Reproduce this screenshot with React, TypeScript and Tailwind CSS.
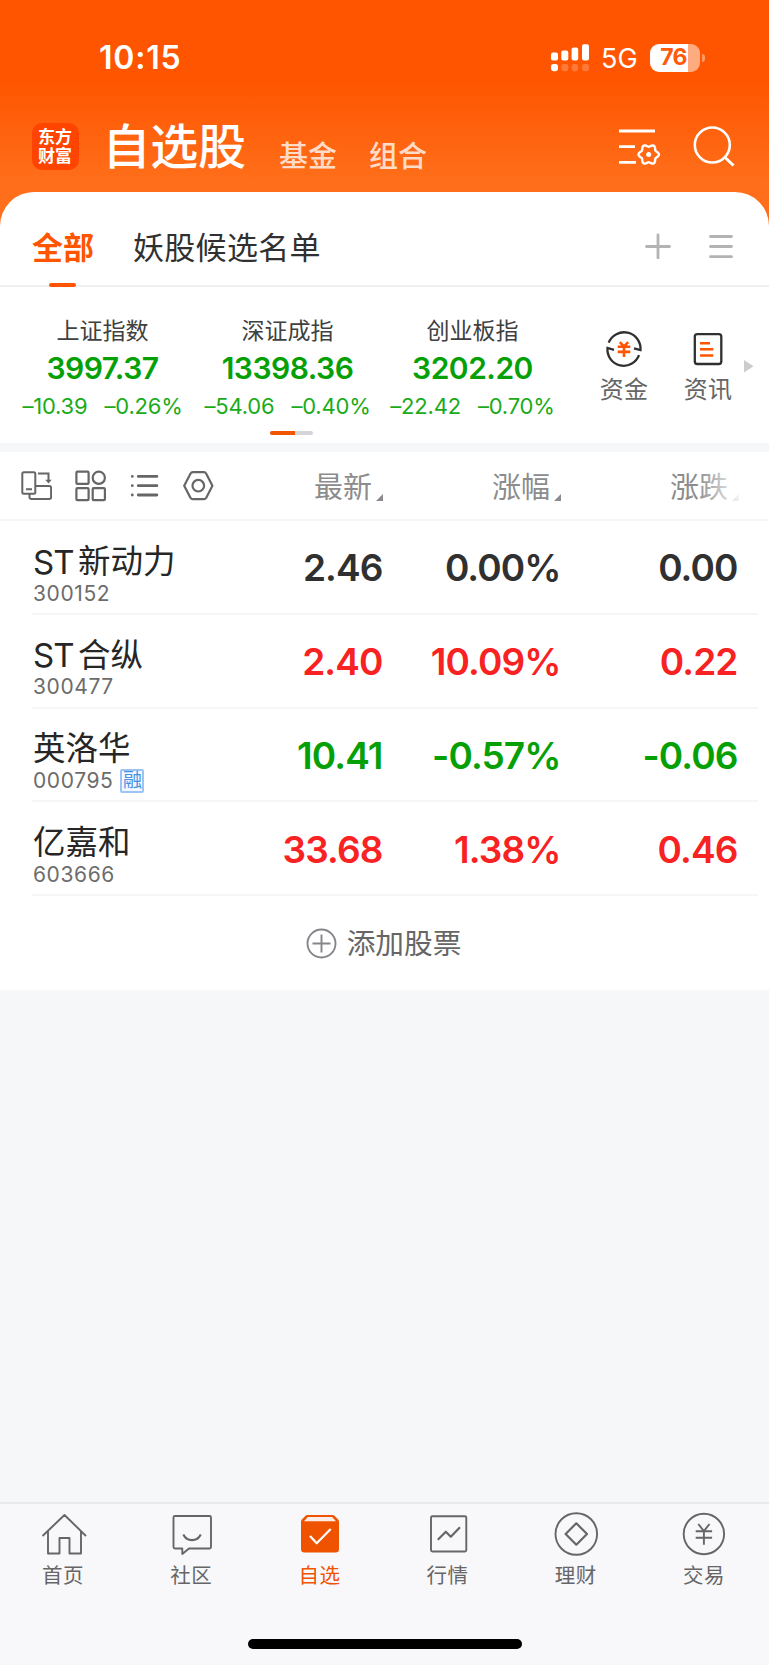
import type { ReactNode } from 'react';
import clsx from 'clsx';

interface Stock {
  name: string;
  latin?: string;
  code: string;
  margin?: boolean;
  price: string;
  percent: string;
  change: string;
  trend: 'up' | 'down' | 'flat';
}

const indices = [
  { name: '上证指数', value: '3997.37', change: '–10.39', percent: '–0.26%' },
  { name: '深证成指', value: '13398.36', change: '–54.06', percent: '–0.40%' },
  { name: '创业板指', value: '3202.20', change: '–22.42', percent: '–0.70%' },
];

const stocks: Stock[] = [
  { latin: 'ST', name: '新动力', code: '300152', price: '2.46', percent: '0.00%', change: '0.00', trend: 'flat' },
  { latin: 'ST', name: '合纵', code: '300477', price: '2.40', percent: '10.09%', change: '0.22', trend: 'up' },
  { name: '英洛华', code: '000795', margin: true, price: '10.41', percent: '-0.57%', change: '-0.06', trend: 'down' },
  { name: '亿嘉和', code: '603666', price: '33.68', percent: '1.38%', change: '0.46', trend: 'up' },
];

const trendColor = {
  up: 'text-[#f82222]',
  down: 'text-[#05a005]',
  flat: 'text-[#303030]',
};

// Six-lobed outline for the settings gear
const gearPath =
  Array.from({ length: 72 }, (_, i) => {
    const a = (i / 72) * Math.PI * 2;
    const r = 9 + 1.2 * Math.cos(6 * a);
    return `${i === 0 ? 'M' : 'L'}${(29.7 + r * Math.cos(a)).toFixed(2)} ${(26.5 + r * Math.sin(a)).toFixed(2)}`;
  }).join('') + 'Z';

function StatusBar() {
  return (
    <div className="flex h-[116px] items-center pl-[99px] pr-[64px] text-white">
      <span className="text-[32px] leading-none font-semibold tracking-[0.8px]">10:15</span>
      <svg className="ml-auto" width="38" height="28" viewBox="0 0 38 28" fill="#fff">
        <rect x="0" y="8.5" width="7" height="8" rx="2" />
        <rect x="10.3" y="6.5" width="7" height="10" rx="2" />
        <rect x="20.6" y="3.5" width="6.6" height="13" rx="2" />
        <rect x="31" y="0.2" width="7" height="16.3" rx="2" />
        <rect x="0" y="20" width="7" height="7.2" rx="2.4" />
        <g opacity="0.22">
          <rect x="10.3" y="20" width="7" height="7.2" rx="2.4" />
          <rect x="20.6" y="20" width="6.6" height="7.2" rx="2.4" />
          <rect x="31" y="20" width="7" height="7.2" rx="2.4" />
        </g>
      </svg>
      <span className="ml-[12px] w-[36px] text-[27px] leading-none">5G</span>
      <div className="-mt-[1px] ml-[13px] flex items-center gap-[2px]">
        <div className="flex h-[28px] w-[50px] items-center justify-center rounded-[9px] bg-[linear-gradient(90deg,#fff_76%,#ffab80_76%)] text-[23px] leading-none font-bold text-[#ff5a0a]">
          <span className="-ml-[3px] tracking-[-0.8px]">76</span>
        </div>
        <div className="h-[8px] w-[3px] rounded-r-full bg-[#ff9a66]" />
      </div>
    </div>
  );
}

function NavBar() {
  return (
    <div className="flex h-[61px] items-center pl-[31.5px] pr-[33px] text-white">
      <div className="flex h-[47px] w-[47px] flex-col items-center justify-center rounded-[10px] bg-[#ff4400] text-[17px] leading-[19px] font-bold">
        <span>东方</span>
        <span>财富</span>
      </div>
      <h1 className="ml-[24px] text-[48px] leading-none font-medium tracking-[-0.2px]">自选股</h1>
      <span className="ml-[33px] pt-[20px] text-[29px] leading-none font-medium text-[#ffdcc8]">基金</span>
      <span className="ml-[32px] pt-[20px] text-[29px] leading-none font-medium text-[#ffdcc8]">组合</span>
      <svg className="mt-[7px] ml-auto" width="44" height="44" viewBox="0 0 44 44" fill="none" stroke="#fff" strokeWidth="2.8">
        <path d="M0 3h36M0 18.6h16M0 34.4h17" />
        <path d={gearPath} strokeWidth="2.4" strokeLinejoin="round" />
        <circle cx="29.7" cy="26.5" r="2.5" fill="#fff" stroke="none" />
      </svg>
      <svg className="mt-[1px] ml-[29px]" width="44" height="44" viewBox="0 0 44 44" fill="none" stroke="#fff" strokeWidth="2.6">
        <circle cx="20.3" cy="20" r="17.5" />
        <path d="m32 31.5 9.5 9" strokeWidth="3" />
      </svg>
    </div>
  );
}

function GroupTabs() {
  return (
    <div className="flex h-[95px] items-stretch border-b-2 border-[#f0f0f1] pl-[32px] pr-[36px]">
      <div className="relative flex items-center pt-[17px] text-[31px] leading-none font-bold text-[#ff5500]">
        全部
        <span className="absolute -bottom-[2px] left-[17px] h-[4px] w-[27px] rounded-[2px] bg-[#ff5500]" />
      </div>
      <div className="ml-[39px] flex items-center pt-[17px] text-[31px] leading-none tracking-[0.3px] text-[#303030]">妖股候选名单</div>
      <svg className="mt-[41px] ml-auto" width="26" height="26" viewBox="0 0 26 26" stroke="#b3b3b3" strokeWidth="2.8" strokeLinecap="round">
        <path d="M13 2v23M1.500 13.500h23" />
      </svg>
      <svg className="mt-[42px] ml-[38px]" width="24" height="26" viewBox="0 0 24 26" stroke="#b3b3b3" strokeWidth="2.8" strokeLinecap="round">
        <path d="M1.500 2.500h21M1.500 12.500h21M1.500 22.700h21" />
      </svg>
    </div>
  );
}

function IndexStrip() {
  return (
    <div className="flex h-[156px] pl-[10px]">
      <div className="flex w-[555px] flex-col">
        <div className="grid grid-cols-3 pt-[27px]">
          {indices.map((item) => (
            <div key={item.name} className="flex flex-col items-center">
              <div className="h-[33px] text-[23px] leading-[34px] text-[#404040]">{item.name}</div>
              <div className="h-[42px] text-[30px] leading-[43px] font-semibold tracking-[-0.5px] text-[#05a005]">{item.value}</div>
              <div className="flex h-[33px] gap-[17px] text-[22px] leading-[34px] tracking-[-0.2px] whitespace-nowrap text-[#1aab1a]">
                <span>{item.change}</span>
                <span>{item.percent}</span>
              </div>
            </div>
          ))}
        </div>
        <div className="mt-[9px] ml-[260px] flex h-[4px] w-[43px] overflow-hidden rounded-full bg-[#d3d5db]">
          <div className="w-[25px] bg-[#f05500]" />
        </div>
      </div>
      <div className="ml-[17px] flex w-[84px] flex-col items-center pt-[43px]">
        <svg width="38" height="38" viewBox="-19 -19 38 38" fill="none" stroke="#303030" strokeWidth="2.3">
          <path d="M-15.3 -6.3A16.5 16.5 0 0 1 16.5 1L10 -.7" />
          <path d="M15 6.2A16.3 16.3 0 0 1 -16.5 -1L-10 .8" />
          <path d="M-4.2 -6.8 0 -2.5 4.2 -6.8M-6.3 -2.2H6.3M-6.3 2.9H6.3M0 -2.5V8" stroke="#ff5500" strokeWidth="2.6" />
        </svg>
        <div className="mt-[8px] text-[24px] leading-[28px] tracking-[0.3px] text-[#666]">资金</div>
      </div>
      <div className="flex w-[84px] flex-col items-center pt-[43px]">
        <svg width="38" height="38" viewBox="0 0 38 38" fill="none" strokeWidth="2.3">
          <rect x="5.8" y="4.2" width="26.5" height="29.8" rx="2.5" stroke="#303030" />
          <path d="M11 13.2h10M11 19.3h13.3M11 25.5h13.3" stroke="#ff5500" strokeWidth="2.6" />
        </svg>
        <div className="mt-[8px] text-[24px] leading-[28px] tracking-[0.3px] text-[#666]">资讯</div>
      </div>
      <svg className="mt-[73px] -ml-[6px]" width="10" height="13" viewBox="0 0 10 13" fill="#ccc">
        <path d="M0 0 9.5 6.2 0 12.4Z" />
      </svg>
    </div>
  );
}

function Toolbar() {
  return (
    <div className="flex w-[205px] shrink-0 gap-[22px] pt-[1px] pl-[20px] *:shrink-0">
      <svg width="32" height="34" viewBox="0 0 32 34" fill="none" stroke="#666" strokeWidth="2">
        <rect x="2.3" y="3.3" width="13" height="21.4" rx="1.5" />
        <path d="M6 20.2h6M9.5 25v3.2a1.8 1.8 0 0 0 1.8 1.8h18a1.8 1.8 0 0 0 1.8-1.8v-9.400a1.8 1.8 0 0 0-1.8-1.8H15.500M18 4.600h10.500v7" />
        <path d="M25.3 10.8h6.4l-3.2 3.8Z" fill="#666" stroke="none" />
      </svg>
      <svg width="32" height="34" viewBox="0 0 32 34" fill="none" stroke="#666" strokeWidth="2.2">
        <rect x="2.4" y="2.7" width="12.2" height="12.2" rx="1" />
        <circle cx="24.8" cy="8.8" r="6.1" />
        <rect x="2.4" y="19.2" width="12.2" height="12" rx="1" />
        <rect x="18.7" y="19.2" width="12.2" height="12" rx="1" />
      </svg>
      <svg width="32" height="34" viewBox="0 0 32 34" fill="none" stroke="#666" strokeWidth="2.8" strokeLinecap="round">
        <path d="M4.3 7.4v.01M4.3 16.7v.01M4.3 26v.01M10.3 7.4h18.6M10.3 16.7h18.6M10.3 26h18.6" />
      </svg>
      <svg width="32" height="34" viewBox="0 0 32 34" fill="none" stroke="#666" strokeWidth="2.2" strokeLinejoin="round">
        <path d="M2.2 16.7 8.3 5Q9.2 3.2 11 3.2H21.7Q23.5 3.2 24.4 5L30.4 16.7 24.4 28.4Q23.5 30.2 21.7 30.2H11Q9.2 30.2 8.3 28.4Z" />
        <circle cx="16.3" cy="16.7" r="5.8" />
      </svg>
    </div>
  );
}

function ColumnTitle({ children }: { children: ReactNode }) {
  return (
    <div className="flex w-[178px] items-end justify-end gap-[4px] text-[29px] leading-[35px] text-[#8c8c8c]">
      {children}
      <svg className="mb-[4px]" width="7" height="7" viewBox="0 0 7 7" fill="#8a8a90">
        <path d="M7 0v7H0Z" />
      </svg>
    </div>
  );
}

function TableHeader() {
  return (
    <div className="flex h-[69px] items-center border-b-2 border-[#f6f6f7]">
      <Toolbar />
      <div className="relative flex pt-[3px]">
        <ColumnTitle>最新</ColumnTitle>
        <ColumnTitle>涨幅</ColumnTitle>
        <ColumnTitle>涨跌</ColumnTitle>
        <div className="absolute top-0 right-0 h-full w-[42px] bg-linear-to-r from-transparent to-white/90" />
      </div>
    </div>
  );
}

function StockRow({ stock }: { stock: Stock }) {
  return (
    <div className="mr-[11px] ml-[32px] flex h-[93.75px] border-b-2 border-[#f6f6f7]">
      <div className="w-[172px] pt-[24px] pl-[1px]">
        <div className="flex h-[34px] items-center gap-[4px] text-[32.5px] leading-none text-[#262626]">
          {stock.latin && <span className="text-[33px] tracking-[-0.8px]">{stock.latin}</span>}
          <span>{stock.name}</span>
        </div>
        <div className="flex h-[28px] items-center text-[21px] leading-none tracking-[0.6px] text-[#6c6c6c]">
          {stock.code}
          {stock.margin && (
            <span className="ml-[7px] flex h-[24px] w-[24px] items-center justify-center rounded-[2px] border-2 border-[#9cc3f2] bg-[#f2f8ff] text-[19px] tracking-normal text-[#4a90e2]">
              融
            </span>
          )}
        </div>
      </div>
      <div
        className={clsx(
          'flex items-center pt-[2px] text-right text-[37px] leading-none font-semibold tracking-[-0.9px]',
          trendColor[stock.trend],
        )}
      >
        <span className="w-[178.5px]">{stock.price}</span>
        <span className="w-[178px]">{stock.percent}</span>
        <span className="w-[177px]">{stock.change}</span>
      </div>
    </div>
  );
}

function AddStock() {
  return (
    <div className="flex h-[94px] items-center justify-center gap-[10px] pr-[2px]">
      <svg width="31" height="31" viewBox="0 0 31 31" fill="none" stroke="#85858b" strokeWidth="1.9">
        <circle cx="15.5" cy="15.5" r="14" />
        <path d="M15.5 6.5v18M6.5 15.5h18" />
      </svg>
      <span className="pt-[2px] text-[28.7px] leading-none text-[#666]">添加股票</span>
    </div>
  );
}

function TabItem({ label, active, children }: { label: string; active?: boolean; children: ReactNode }) {
  return (
    <div className={clsx('flex flex-1 flex-col items-center', active ? 'text-[#ef5300]' : 'text-[#666]')}>
      <svg width="48" height="46" viewBox="0 0 48 46" fill="none" stroke="currentColor" strokeWidth="1.9" strokeLinejoin="round">
        {children}
      </svg>
      <span className="mt-[6px] -ml-[2px] text-[20.5px] leading-[26px] tracking-[0.5px]">{label}</span>
    </div>
  );
}

function TabBar() {
  return (
    <div className="flex h-[163px] flex-col border-t-2 border-[#e9eaec] bg-[#f8f8fb]">
      <div className="flex pt-[7px]">
        <TabItem label="首页">
          <path d="M2.5 25 24.5 4 46 25M8 20.5v22h11.5V27h10v15.5H41v-22" />
        </TabItem>
        <TabItem label="社区">
          <path d="M7 5h34.5a1.5 1.5 0 0 1 1.5 1.5V36a1.5 1.5 0 0 1-1.5 1.5H21L14.3 43v-5.5H7A1.5 1.5 0 0 1 5.5 36V6.5A1.5 1.5 0 0 1 7 5Z" />
          <path d="M15.3 23.5C19 31 29 31 32.8 23.5" strokeWidth="2.1" />
        </TabItem>
        <TabItem label="自选" active>
          <path d="M11.5 4h25a3 3 0 0 1 2.2 1l3.4 3.6a3 3 0 0 1 .9 2.1V38a3.5 3.5 0 0 1-3.5 3.5h-31A3.5 3.5 0 0 1 5 38V10.7a3 3 0 0 1 .9-2.1L9.3 5a3 3 0 0 1 2.2-1Z" fill="currentColor" stroke="none" />
          <path d="M8 10.3 11.8 6h24.4L40 10.3Z" fill="#fbeee8" stroke="none" />
          <path d="M14 25l6.7 7.3L34.7 18" stroke="#fff" strokeWidth="2.2" />
        </TabItem>
        <TabItem label="行情">
          <rect x="6" y="5.2" width="35.3" height="35.3" rx="1.5" />
          <path d="m12.8 28.7 8-8 5 5L35 16.3" strokeWidth="2.2" />
        </TabItem>
        <TabItem label="理财">
          <circle cx="23.3" cy="23" r="20.8" />
          <path d="m23.3 12.3 10.7 10.7-10.7 10.7L12.6 23Z" strokeWidth="2.2" />
        </TabItem>
        <TabItem label="交易">
          <circle cx="22.9" cy="23" r="20.2" />
          <path d="m17.3 13 5.6 7.2L28.500 13M14.7 20.2h16.4M14.7 26.7h16.4M22.9 20.2v13.6" />
        </TabItem>
      </div>
      <div className="mx-auto mt-[50px] h-[10px] w-[274px] rounded-full bg-black" />
    </div>
  );
}

export default function App() {
  return (
    <div className="flex h-[1665px] w-[769px] flex-col overflow-hidden bg-[#f6f7f9] font-['Inter','Noto_Sans_CJK_SC',sans-serif]">
      <div className="bg-[linear-gradient(180deg,#ff5500_80px,#ff6e1a_180px)]">
        <StatusBar />
        <NavBar />
        <div className="mt-[15px] rounded-t-[34px] bg-white">
          <GroupTabs />
          <IndexStrip />
        </div>
      </div>
      <div className="mt-[9px] bg-white">
        <TableHeader />
        {stocks.map((stock) => (
          <StockRow key={stock.code} stock={stock} />
        ))}
        <AddStock />
      </div>
      <div className="mt-auto">
        <TabBar />
      </div>
    </div>
  );
}
